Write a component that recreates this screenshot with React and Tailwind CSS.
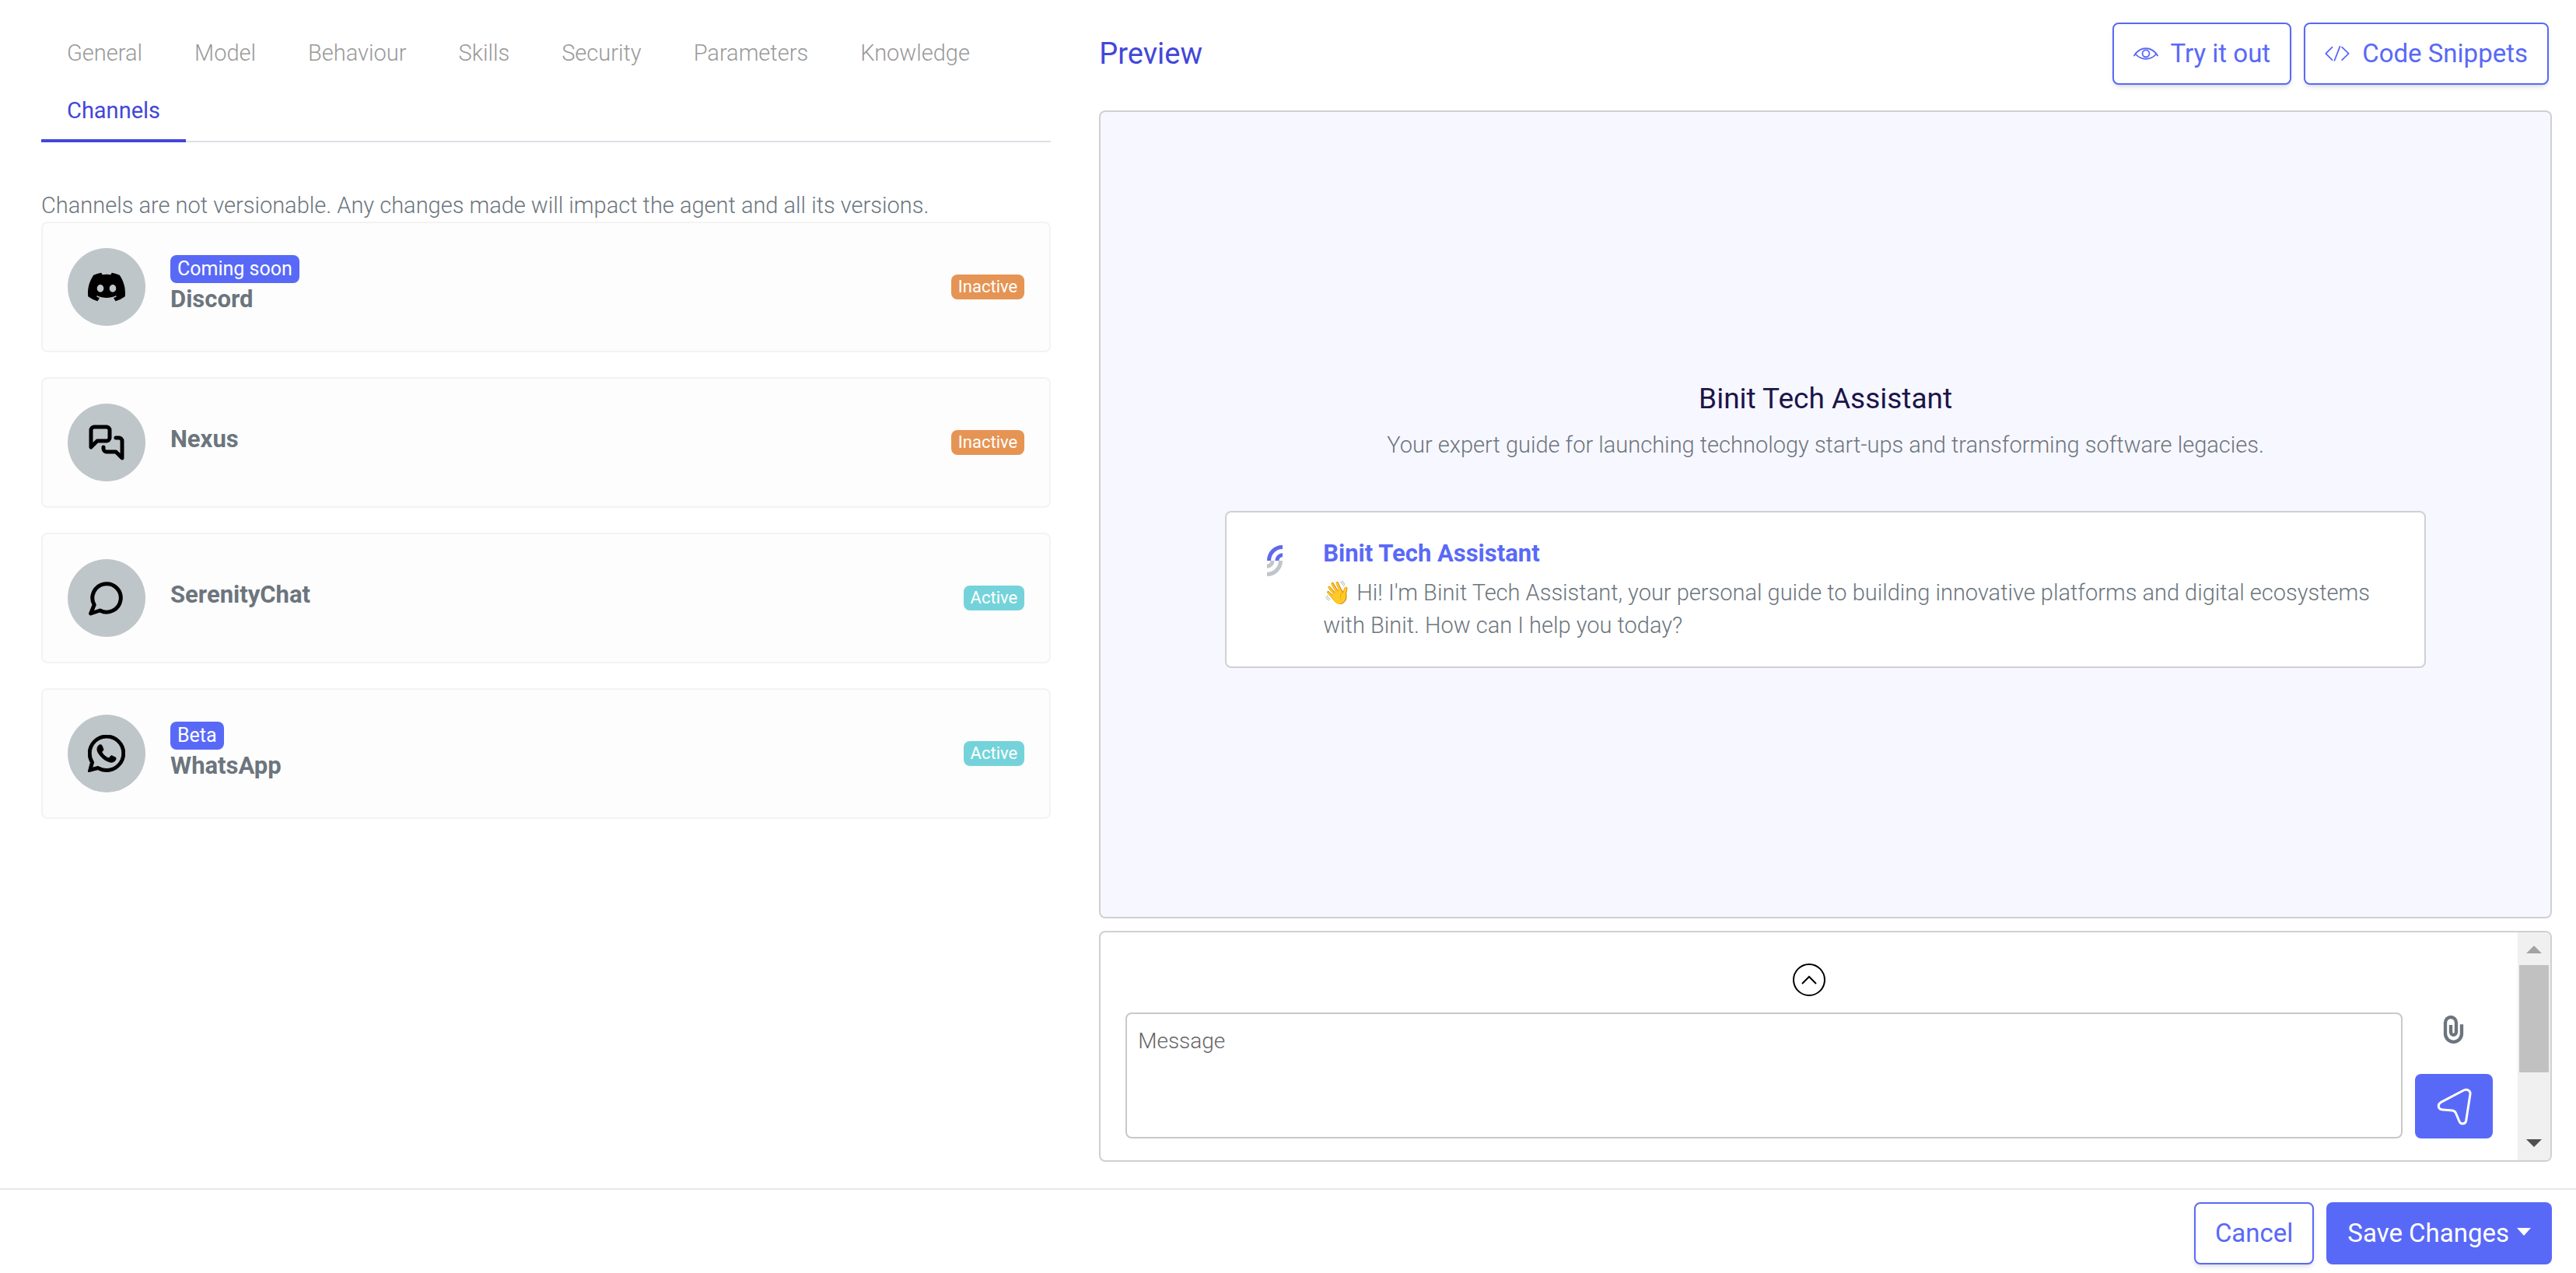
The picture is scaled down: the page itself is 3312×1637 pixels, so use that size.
import { BsDiscord, BsWhatsapp } from "react-icons/bs";

const tabs = ["General", "Model", "Behaviour", "Skills", "Security", "Parameters", "Knowledge"];

function MessagesIcon() {
  return (
    <svg viewBox="0 0 24 24" className="size-12" fill="none" stroke="currentColor" strokeWidth="2.5" strokeLinecap="round" strokeLinejoin="round" aria-hidden="true">
      <path d="M14 9a2 2 0 0 1-2 2H6l-4 4V4c0-1.1.9-2 2-2h8a2 2 0 0 1 2 2z" />
      <path d="M18 9h2a2 2 0 0 1 2 2v11l-4-4h-6a2 2 0 0 1-2-2v-1" />
    </svg>
  );
}

function BubbleIcon() {
  return (
    <svg viewBox="0 0 24 24" className="size-12 overflow-visible" fill="none" stroke="currentColor" strokeWidth="2.5" strokeLinecap="round" strokeLinejoin="round" aria-hidden="true">
      <path d="M1.8 22 4.1 16.4A9.1 9.1 0 1 1 7.8 20Z" />
    </svg>
  );
}

function EyeIcon() {
  return (
    <svg viewBox="119 99 97 97" className="size-8 shrink-0" fill="none" stroke="currentColor" strokeWidth="5.5" strokeLinecap="round" aria-hidden="true">
      <path d="M122 155Q139 127 167.500 127T213 155" />
      <path d="M127 149Q144 168 167.500 168T208 149" />
      <circle cx="167.500" cy="147" r="13.500" />
    </svg>
  );
}

function CodeIcon() {
  return (
    <svg viewBox="860 99 97 97" className="size-8 shrink-0" fill="none" stroke="currentColor" strokeWidth="5.5" strokeLinecap="round" strokeLinejoin="round" aria-hidden="true">
      <path d="M889 122 864 147 889 172M919 120 898 174M927 122 953 147 927 172" />
    </svg>
  );
}

function LogoMark() {
  return (
    <svg viewBox="0 0 60 120" className="h-10 w-5" fill="none" strokeWidth="15" aria-hidden="true">
      <g stroke="#6068ee">
        <path d="M7.500 60A52.500 52.500 0 0 1 60 7.500" />
        <path d="M38.500 60A21.500 21.500 0 0 1 60 38.500" />
      </g>
      <g stroke="#c0c5ca">
        <path d="M52.500 60A52.500 52.500 0 0 1 0 112.500" />
        <path d="M21.500 60A21.500 21.500 0 0 1 0 81.500" />
      </g>
    </svg>
  );
}

function PaperclipIcon() {
  return (
    <svg viewBox="178 342 90 120" className="h-10 w-[30px]" fill="none" stroke="currentColor" strokeWidth="13" aria-hidden="true">
      <path d="M253 382V418A31.500 31.500 0 0 1 190 418V375A21 21 0 0 1 232 375V412A10.500 10.500 0 0 1 211 412V384" />
    </svg>
  );
}

function SendIcon() {
  return (
    <svg viewBox="155 628 141 150" className="h-[50px] w-[47px]" fill="none" stroke="currentColor" strokeWidth="9" strokeLinejoin="round" aria-hidden="true">
      <path d="M262 640 173 687Q163 693 165 704Q167 714 180 715L218 718Q227 719 231 727L245 760Q249 770 258 769Q269 768 271 758L287 655Q288 646 281 641Q273 635 262 640Z" />
    </svg>
  );
}

const channels = [
  { name: "Discord", tag: "Coming soon", active: false, icon: <BsDiscord className="size-12" /> },
  { name: "Nexus", active: false, icon: <MessagesIcon /> },
  { name: "SerenityChat", active: true, icon: <BubbleIcon /> },
  { name: "WhatsApp", tag: "Beta", active: true, icon: <BsWhatsapp className="size-12" strokeWidth={0.3} /> },
];

function Channel({ name, tag, active, icon }) {
  return (
    <li className="flex h-[168px] items-center rounded-lg border-2 border-[#f3f3f3] bg-[#fdfdfd] px-8">
      <span className="flex size-[100px] shrink-0 items-center justify-center rounded-full bg-[#bfc6ca] text-black">{icon}</span>
      <div className={tag ? "ml-8 flex flex-1 flex-col items-start pb-1" : "ml-8 flex-1 pb-2"}>
        {tag && <span className="flex h-9 items-center rounded-lg bg-[#5969f7] px-[9px] text-[25px] text-white">{tag}</span>}
        <h3 className="text-[31px] leading-[42px] font-bold">{name}</h3>
      </div>
      <span className={active ? "flex h-8 items-center rounded-lg bg-[#74d3da] px-[9px] text-[22px] text-white" : "flex h-8 items-center rounded-lg bg-[#e69454] px-[9px] text-[22px] text-white"}>
        {active ? "Active" : "Inactive"}
      </span>
    </li>
  );
}

function OutlineButton({ icon, children }) {
  return (
    <button type="button" className="flex h-20 items-center gap-4 rounded-lg border-2 border-[#5969f7] bg-white px-[25px] text-[33px] text-[#5969f7] shadow-md">
      {icon}
      {children}
    </button>
  );
}

function Scrollbar() {
  return (
    <div className="flex w-[42px] shrink-0 flex-col items-center bg-[#f0f0f0] py-[17px]" aria-hidden="true">
      <svg viewBox="0 0 20 10" className="h-[10px] w-5 fill-[#a3a3a3]"><path d="M0 10 10 0 20 10Z" /></svg>
      <div className="mt-[15px] h-[138px] w-[38px] bg-[#c1c1c1]" />
      <svg viewBox="0 0 20 10" className="mt-auto h-[10px] w-5 fill-[#505050]"><path d="M0 0 10 10 20 0Z" /></svg>
    </div>
  );
}

export default function App() {
  return (
    <div className="flex min-h-screen flex-col bg-white font-[Roboto,sans-serif] text-[29px] leading-[42px] font-normal text-[#6c757d]">
      <main className="flex flex-1">
        <section className="w-[42.67%] shrink-0 pt-[31px] pr-[62px] pl-[53px]">
          <nav className="flex flex-wrap gap-x-px border-b-2 border-[#dee2e6] font-light text-[#999]">
            {tabs.map((t) => (
              <button key={t} type="button" className="h-[74px] px-[33px]">{t}</button>
            ))}
            <button type="button" className="-mb-[2px] h-[78px] border-b-4 border-[#4347d9] px-[33px] font-normal text-[#4347d9]">Channels</button>
          </nav>
          <p className="mt-[60px] font-light">Channels are not versionable. Any changes made will impact the agent and all its versions.</p>
          <ul className="flex flex-col gap-8">
            {channels.map((c) => <Channel key={c.name} {...c} />)}
          </ul>
        </section>

        <section className="flex min-w-0 flex-1 flex-col pt-[29px] pr-[31px] pb-[34px]">
          <header className="flex items-center gap-4 pr-1">
            <h2 className="flex-1 text-[38px] text-[#4347d9]">Preview</h2>
            <OutlineButton icon={<EyeIcon />}>Try it out</OutlineButton>
            <OutlineButton icon={<CodeIcon />}>Code Snippets</OutlineButton>
          </header>

          <div className="mt-[33px] flex flex-1 flex-col justify-center rounded-lg border-2 border-[#d0d0d3] bg-[#f7f7ff] px-40">
            <h1 className="pt-5 text-center text-[37px] leading-[56px] text-[#1c1549]">Binit Tech Assistant</h1>
            <p className="mt-[10px] text-center font-light">Your expert guide for launching technology start-ups and transforming software legacies.</p>
            <article className="mt-16 flex gap-8 rounded-lg border-2 border-[#d0d0d3] bg-white p-8">
              <span className="flex size-[60px] shrink-0 items-center justify-center"><LogoMark /></span>
              <div className="flex-1">
                <h3 className="text-[31px] font-bold text-[#5969f7]">Binit Tech Assistant</h3>
                <p className="mt-2 font-light">👋 Hi! I'm Binit Tech Assistant, your personal guide to building innovative platforms and digital ecosystems with Binit. How can I help you today?</p>
              </div>
            </article>
          </div>

          <div className="mt-4 flex overflow-hidden rounded-lg border-2 border-[#d0d0d3]">
            <form className="flex flex-1 flex-col px-8 pt-10 pb-7">
              <button type="button" aria-label="Expand" className="flex size-[42px] items-center justify-center self-center rounded-full border-2 border-black text-black">
                <svg viewBox="0 0 20 12" className="h-3 w-5" fill="none" stroke="currentColor" strokeWidth="2"><path d="M1 11 10 2 19 11" /></svg>
              </button>
              <div className="mt-[21px] flex gap-4">
                <textarea aria-label="Message" placeholder="Message" className="h-[162px] flex-1 resize-none rounded-lg border-2 border-[#c8c8c8] px-[14px] py-[14px] text-[28px] font-light placeholder:text-[#666]" />
                <div className="flex w-[100px] flex-col justify-between">
                  <button type="button" aria-label="Attach file" className="flex h-11 items-center justify-center"><PaperclipIcon /></button>
                  <button type="submit" aria-label="Send" className="flex h-[83px] items-center justify-center rounded-lg bg-[#5969f7] text-white"><SendIcon /></button>
                </div>
              </div>
            </form>
            <Scrollbar />
          </div>
        </section>
      </main>

      <footer className="flex justify-end gap-4 border-t-2 border-[#e7e7ee] pt-4 pr-[31px] pb-[11px]">
        <OutlineButton>Cancel</OutlineButton>
        <button type="button" className="flex h-20 items-center gap-[10px] rounded-lg bg-[#5969f7] px-[27px] text-[33px] text-white">
          Save Changes
          <svg viewBox="0 0 18 10" className="mb-1 h-[10px] w-[18px] fill-current" aria-hidden="true"><path d="M0 0H18L9 10Z" /></svg>
        </button>
      </footer>
    </div>
  );
}
